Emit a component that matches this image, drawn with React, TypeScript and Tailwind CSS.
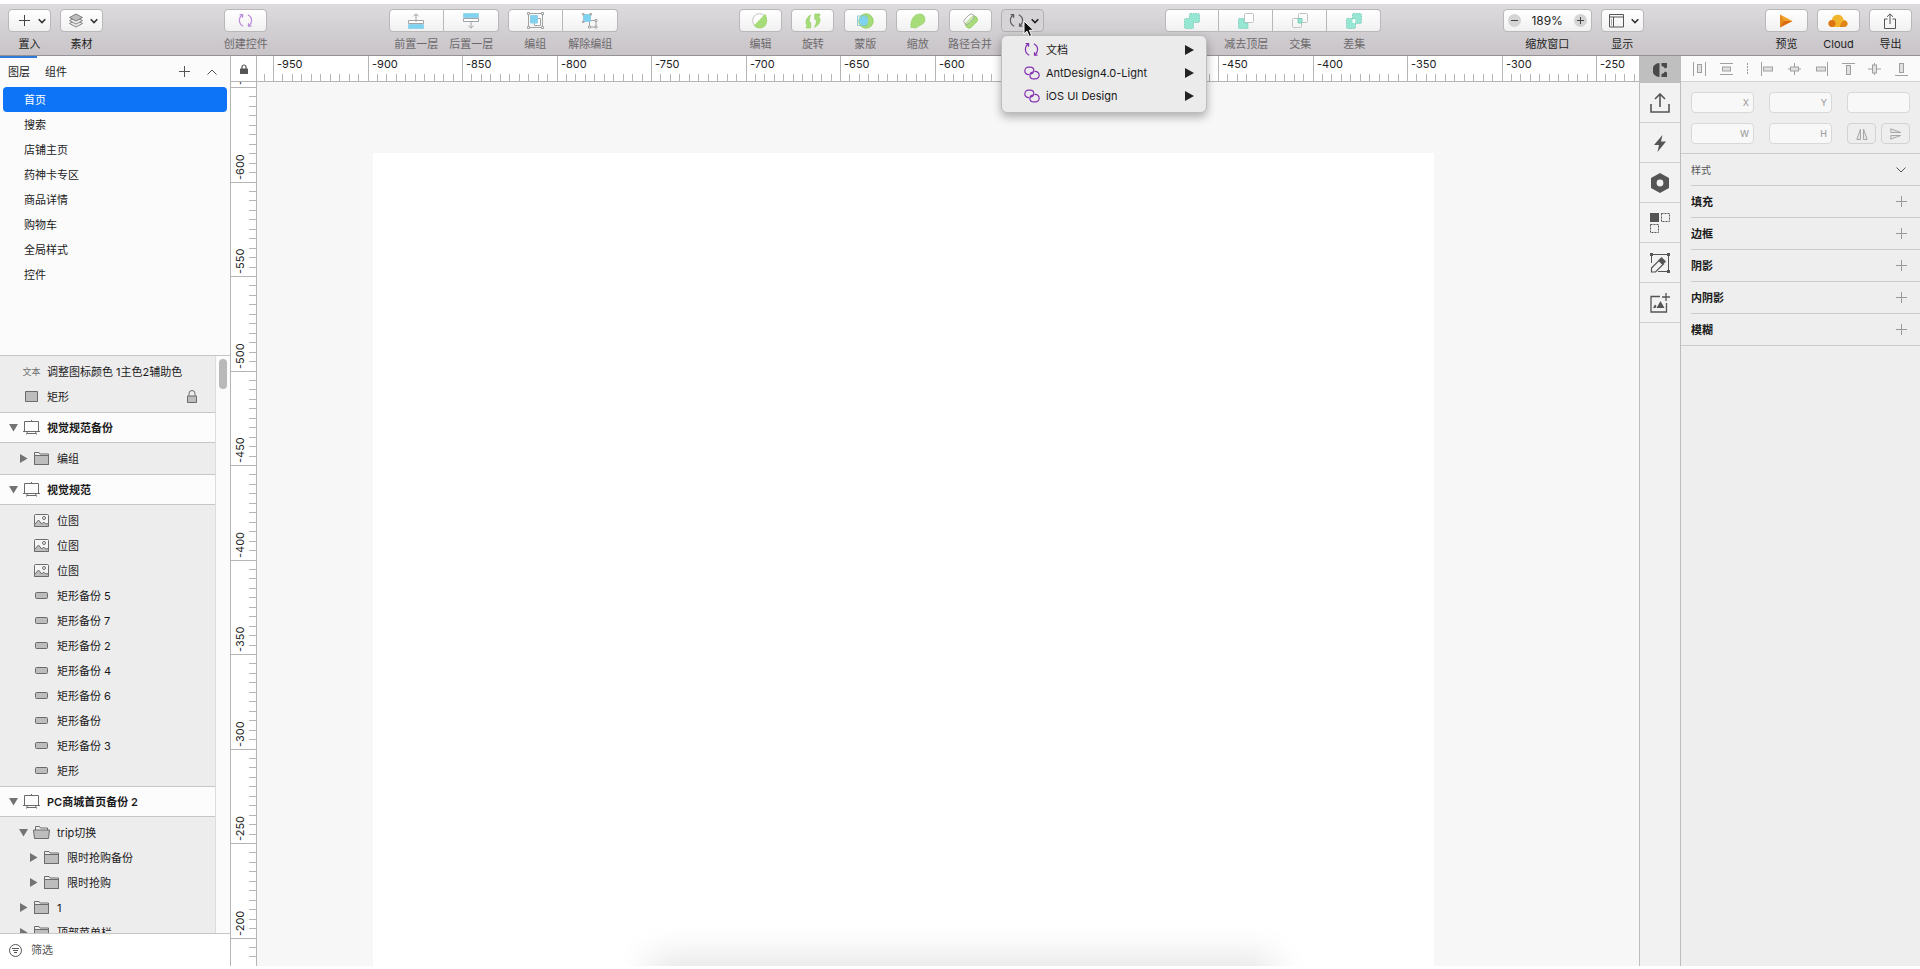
import type { ReactNode } from 'react'

interface Layer {
  name: string
  icon: 'text' | 'rect' | 'bar' | 'image' | 'folder' | 'folderOpen'
  depth: number
  arrow?: 'open' | 'closed'
  locked?: boolean
}

interface Artboard {
  title?: string
  layers: Layer[]
}

const pages = ['首页', '搜索', '店铺主页', '药神卡专区', '商品详情', '购物车', '全局样式', '控件']

const artboards: Artboard[] = [
  {
    layers: [
      { name: '调整图标颜色 1主色2辅助色', icon: 'text', depth: 0 },
      { name: '矩形', icon: 'rect', depth: 0, locked: true },
    ],
  },
  {
    title: '视觉规范备份',
    layers: [{ name: '编组', icon: 'folder', depth: 1, arrow: 'closed' }],
  },
  {
    title: '视觉规范',
    layers: [
      { name: '位图', icon: 'image', depth: 1 },
      { name: '位图', icon: 'image', depth: 1 },
      { name: '位图', icon: 'image', depth: 1 },
      { name: '矩形备份 5', icon: 'bar', depth: 1 },
      { name: '矩形备份 7', icon: 'bar', depth: 1 },
      { name: '矩形备份 2', icon: 'bar', depth: 1 },
      { name: '矩形备份 4', icon: 'bar', depth: 1 },
      { name: '矩形备份 6', icon: 'bar', depth: 1 },
      { name: '矩形备份', icon: 'bar', depth: 1 },
      { name: '矩形备份 3', icon: 'bar', depth: 1 },
      { name: '矩形', icon: 'bar', depth: 1 },
    ],
  },
  {
    title: 'PC商城首页备份 2',
    layers: [
      { name: 'trip切换', icon: 'folderOpen', depth: 1, arrow: 'open' },
      { name: '限时抢购备份', icon: 'folder', depth: 2, arrow: 'closed' },
      { name: '限时抢购', icon: 'folder', depth: 2, arrow: 'closed' },
      { name: '1', icon: 'folder', depth: 1, arrow: 'closed' },
      { name: '顶部菜单栏', icon: 'folder', depth: 1, arrow: 'closed' },
    ],
  },
]

const indents = ['pl-[9px]', 'pl-[19px]', 'pl-[29px]']

const styleSections = ['填充', '边框', '阴影', '内阴影', '模糊']

/* ---------- icons ---------- */

function Chevron({ className = 'text-[#333]' }: { className?: string }) {
  return (
    <svg width="8" height="6" viewBox="0 0 8 6" fill="none" stroke="currentColor" strokeWidth="1.6" className={className}>
      <path d="M0.7 1.2 4 4.6l3.3-3.4" />
    </svg>
  )
}

function Plus({ className = '' }: { className?: string }) {
  return (
    <svg width="11" height="11" viewBox="0 0 11 11" stroke="currentColor" strokeWidth="1" className={className}>
      <path d="M5.5 0v11M0 5.5h11" />
    </svg>
  )
}

function SymbolIcon({ className = '' }: { className?: string }) {
  return (
    <svg width="15" height="15" viewBox="0 0 15 15" fill="none" stroke="currentColor" strokeWidth="1.2" className={className}>
      <path d="M5.2 13.2C2.6 12 1.4 9.6 1.4 7.3c0-2 .9-4 2.8-5.4" />
      <path d="M1.6 1.7h3v3" />
      <path d="M9.8 1.7c2.5 1.2 3.8 3.5 3.8 5.9 0 2-.9 3.9-2.8 5.3" />
      <path d="M13.5 13.2h-3v-3" />
    </svg>
  )
}

function LinkIcon() {
  return (
    <svg width="16" height="14" viewBox="0 0 16 14" fill="none" stroke="currentColor" strokeWidth="1.2" strokeLinecap="round">
      <path d="M4.6 8.6C2.500 8.600.8 7 .8 4.900S2.500 1.200 4.600 1.200h1.600c2 0 3.600 1.500 3.600 3.400 0 1.700-1.200 3-2.800 3.300" />
      <path d="M11.200 5.400c2.200 0 4 1.600 4 3.700s-1.700 3.700-3.800 3.700H9.500c-2 0-3.600-1.500-3.600-3.400 0-1.700 1.200-3.100 2.800-3.400" />
    </svg>
  )
}

function StackIcon() {
  return (
    <svg width="16" height="15" viewBox="0 0 16 15" stroke="#666" strokeWidth="0.8" fill="#ececec">
      <path d="M1.500 10.500 8 7l6.500 3.500L8 14z" />
      <path d="M1.500 7.600 8 4.100l6.500 3.500L8 11.100z" />
      <path d="M1.500 4.500 8 1l6.500 3.500L8 8z" fill="#bdbdbd" />
    </svg>
  )
}

function ForwardIcon() {
  return (
    <svg width="16" height="16" viewBox="0 0 16 16" fill="none" stroke="#a3a3a3">
      <path d="M.5 7.500h15v3H.5z" fill="#fff" />
      <path d="M8 9V1M5.500 3.300 8 .8l2.500 2.500" />
      <path d="M.5 11.500h15v4H.5z" fill="#7fd3f1" stroke="#6ec3e2" strokeDasharray="1 1" />
    </svg>
  )
}

function BackwardIcon() {
  return (
    <svg width="16" height="16" viewBox="0 0 16 16" fill="none" stroke="#a3a3a3">
      <path d="M.5 5.500h15v3H.5z" fill="#fff" />
      <path d="M8 8v7M5.500 12.700 8 15.200l2.500-2.500" />
      <path d="M.5.5h15v4H.5z" fill="#7fd3f1" stroke="#6ec3e2" strokeDasharray="1 1" />
    </svg>
  )
}

function GroupIcon() {
  return (
    <svg width="17" height="17" viewBox="0 0 17 17" fill="none" stroke="#a3a3a3">
      <path d="M1.500 1.500h14v14h-14z" />
      <path d="M7.500 6.500h6v7h-6z" fill="#fff" />
      <path d="M3.500 3.500h7v7.500h-7z" fill="#7fd3f1" stroke="#8ed0e8" />
      <path d="M.5.5h2v2h-2zM14.500.5h2v2h-2zM.5 14.500h2v2h-2zM14.500 14.500h2v2h-2z" fill="#fff" />
    </svg>
  )
}

function UngroupIcon() {
  return (
    <svg width="16" height="16" viewBox="0 0 16 16" fill="none" stroke="#a3a3a3">
      <path d="M7.500 7.500h6.500v6.500H7.500z" />
      <path d="M1.500 1.500h7v7h-7z" fill="#7fd3f1" stroke="#8ed0e8" />
      <path d="M.5.5H2V2H.5zM8 .5h1.500V2H8zM.5 8H2v1.500H.5z" fill="#fff" />
      <path d="M13 6.500h2v2h-2zM6.500 13h2v2h-2zM13 13h2v2h-2z" fill="#fff" />
    </svg>
  )
}

function EditIcon() {
  return (
    <svg width="16" height="16" viewBox="0 0 16 16">
      <circle cx="7.500" cy="7.500" r="6.800" fill="#fff" stroke="#c4c4c4" />
      <path d="M13 1.500 2.200 12.500c1.500 2 4 2.500 6 2.500 3.800 0 6.500-3 6.500-7 0-2.500-.4-5-1.700-6.500z" fill="#a6dd78" stroke="#8cc95b" strokeDasharray="1.500 1" strokeWidth=".8" />
    </svg>
  )
}

function RotateIcon() {
  return (
    <svg width="16" height="16" viewBox="0 0 16 16" fill="#a6dd78" stroke="#8cc95b" strokeWidth=".6">
      <path d="M5.500 2C2.500 4 .8 6.500 1 9.500c0 2 1 3.300 2 4.300H1.200V15h4.500V9.500H4.500c-.6-2 .1-4.500 1-7.500z" />
      <path d="M9.800 1v5.500h1.300c.8 2.500 0 5-1.800 7.800 3.500-1.500 5.800-4 5.700-7.300 0-2-.9-3.500-2-4.500h1.800V1z" />
    </svg>
  )
}

function MaskIcon() {
  return (
    <svg width="18" height="16" viewBox="0 0 18 16">
      <circle cx="10" cy="8" r="7.200" fill="#a6dd78" stroke="#8cc95b" strokeWidth=".8" />
      <path d="M1.500 3h9.500v9.500H1.500z" fill="none" stroke="#75bfdc" strokeWidth=".8" />
      <circle cx="7.500" cy="7.800" r="4.500" fill="#7fd3f1" />
    </svg>
  )
}

function ScaleIcon() {
  return (
    <svg width="16" height="16" viewBox="0 0 16 16">
      <path d="M1 14.500C.3 9 2.500 1.200 9.500 1c3.500 0 5.500 2 5.500 5.500 0 5-5.500 5.500-8.500 8.200C5 15.200 3 14.500 1 14.500z" fill="#a6dd78" stroke="#8cc95b" strokeDasharray="1.500 1" strokeWidth=".8" />
    </svg>
  )
}

function FlattenIcon() {
  return (
    <svg width="17" height="16" viewBox="0 0 17 16">
      <rect x="2.500" y="5.500" width="14" height="7" rx="3.500" transform="rotate(-45 9.500 9)" fill="#a6dd78" stroke="#8cc95b" strokeWidth=".8" />
      <rect x="1" y="3.200" width="12" height="6" rx="3" transform="rotate(-45 7 6.200)" fill="#fff" fillOpacity=".35" stroke="#a3a3a3" strokeWidth=".9" />
    </svg>
  )
}

const mint = '#95e6d2'
const mintEdge = '#6fc5b0'

function UnionIcon() {
  return (
    <svg width="16" height="16" viewBox="0 0 16 16">
      <path d="M6.500.5h8q1 0 1 1v7q0 1-1 1h-5v5q0 1-1 1h-7q-1 0-1-1v-8q0-1 1-1h4v-4q0-1 1-1z" fill={mint} stroke={mintEdge} strokeDasharray="1.500 1" strokeWidth=".8" />
    </svg>
  )
}

function SubtractIcon() {
  return (
    <svg width="16" height="16" viewBox="0 0 16 16">
      <rect x="6.500" y=".5" width="9" height="9" rx="1" fill="#fff" stroke="#c2c2c2" />
      <path d="M1 5.500h5V10h4v5.500H1.500q-1 0-1-1v-8q0-1 .5-1z" fill={mint} stroke={mintEdge} strokeDasharray="1.500 1" strokeWidth=".8" />
    </svg>
  )
}

function IntersectIcon() {
  return (
    <svg width="16" height="16" viewBox="0 0 16 16" fill="none" stroke="#c2c2c2">
      <rect x="6.500" y=".5" width="9" height="9" rx="1" />
      <rect x=".5" y="5.500" width="9" height="9" rx="1" />
      <path d="M6 5.500h4V10H6z" fill={mint} stroke={mintEdge} strokeWidth=".8" />
    </svg>
  )
}

function DifferenceIcon() {
  return (
    <svg width="16" height="16" viewBox="0 0 16 16">
      <g fill={mint} stroke={mintEdge} strokeDasharray="1.500 1" strokeWidth=".8">
        <rect x="6.500" y=".5" width="9" height="10" rx="1" />
        <rect x=".5" y="5.500" width="9" height="10" rx="1" />
      </g>
      <rect x="6.500" y="6" width="3" height="4" rx="1" fill="#fff" />
    </svg>
  )
}

function ViewIcon() {
  return (
    <svg width="15" height="14" viewBox="0 0 15 14" fill="none" stroke="#555">
      <path d="M.5.5h14v12.500H.5zM.5 3h14M4.500 3v10" />
      <path d="M2.500 5v6.500" stroke="#aaa" />
    </svg>
  )
}

function PlayIcon() {
  return (
    <svg width="14" height="14" viewBox="0 0 14 14">
      <path d="M1 .5 13.500 7 1 13.500z" fill="#f0a12c" />
      <path d="M1 .5 5 7l-4 6.500z" fill="#e58a1c" />
      <path d="M5 7h8.500L1 13.500z" fill="#d96a10" />
    </svg>
  )
}

function CloudIcon() {
  return (
    <svg width="20" height="14" viewBox="0 0 20 14">
      <path d="M4.500 13C2 13 .5 11.500.5 9.400c0-2 1.500-3.400 3.500-3.500C4.300 3 6.500.8 9.800.8c3.200 0 5.400 2.200 5.800 5.100 2.400.1 3.900 1.600 3.900 3.600S18 13 15.500 13z" fill="#f2b42c" />
      <path d="M4 5.900c2 0 3.500 1.500 3.500 3.600S6 13 4 13 .5 11.500.5 9.400 2 5.900 4 5.900z" fill="#dc7414" />
      <path d="M12 13c0-3 1.500-5 4-6.500 2.200.3 3.500 1.500 3.500 3.200 0 2-1.500 3.300-4 3.300z" fill="#e08418" />
    </svg>
  )
}

function ExportIcon() {
  return (
    <svg width="12" height="16" viewBox="0 0 12 16" fill="none" stroke="#555">
      <path d="M3.500 6h-3v9.500h11V6h-3M6 11V1M3 3.800 6 .9l3 2.900" />
    </svg>
  )
}

function LayerIcon({ icon }: { icon: Layer['icon'] }) {
  if (icon === 'text') return <span className="text-[9px] leading-4 whitespace-nowrap text-[#6f6f6f]">文本</span>
  if (icon === 'rect') {
    return (
      <svg width="13" height="11" viewBox="0 0 13 11">
        <path d="M.5.5h12v10H.5z" fill="#bdbdbd" stroke="#6b6b6b" />
      </svg>
    )
  }
  if (icon === 'bar') {
    return (
      <svg width="13" height="7" viewBox="0 0 13 7">
        <rect x=".5" y=".5" width="12" height="6" rx="1" fill="#bdbdbd" stroke="#6b6b6b" />
      </svg>
    )
  }
  if (icon === 'image') {
    return (
      <svg width="15" height="13" viewBox="0 0 15 13" stroke="#6b6b6b">
        <rect x=".5" y=".5" width="14" height="12" rx="1" fill="#f5f5f5" />
        <path d="M.5 10.500 4.500 6l3.200 4 2-2 2 2 2.800-.5v3H.5z" fill="#bdbdbd" />
        <circle cx="10" cy="4" r="1.500" fill="none" />
      </svg>
    )
  }
  if (icon === 'folderOpen') {
    return (
      <svg width="17" height="13" viewBox="0 0 17 13" stroke="#6b6b6b">
        <path d="M2.500 4V.5h4l1 1.500h7v2" fill="none" />
        <path d="M.5 4h16l-1 8.500h-14z" fill="#bdbdbd" />
      </svg>
    )
  }
  return (
    <svg width="15" height="13" viewBox="0 0 15 13" stroke="#6b6b6b">
      <path d="M.5 12.500V.5H5l1 1.500h8.500v10.500z" fill="#f0f0f0" />
      <path d="M.5 3.500h14v9H.5z" fill="#bdbdbd" />
    </svg>
  )
}

function Disclosure({ state }: { state?: 'open' | 'closed' }) {
  return (
    <span className="flex w-[9px] shrink-0 justify-center">
      {state && (
        <svg width="9" height="9" viewBox="0 0 9 9" fill="#737373">
          <path d={state === 'open' ? 'M0 1h9L4.500 8.500z' : 'M1 0v9l7.500-4.500z'} />
        </svg>
      )}
    </span>
  )
}

/* ---------- toolbar ---------- */

interface ToolProps {
  label?: string
  name?: string
  dim?: boolean
  menu?: boolean
  children: ReactNode
}

function Tool({ label, dim, menu, children }: ToolProps) {
  return (
    <button className="flex w-[43px] flex-col items-center">
      <span className={`flex h-[23px] w-full items-center rounded border border-[#bab7ba] bg-linear-to-b from-white to-[#f1f1f1] ${menu ? 'justify-between pr-1 pl-[7px]' : 'justify-center'}`}>
        {menu ? (
          <>
            <span className="flex w-4 justify-center">{children}</span>
            <Chevron />
          </>
        ) : (
          children
        )}
      </span>
      <span className={`mt-1 leading-4 whitespace-nowrap ${dim ? 'text-[#6c696c]' : 'text-[#1e1e1e]'}`}>{label}</span>
    </button>
  )
}

function Segment({ label, name, children }: ToolProps) {
  return (
    <button aria-label={label ?? name} className="group flex flex-1 flex-col items-center">
      <span className="flex h-[23px] w-full items-center justify-center border-y border-r border-[#bab7ba] bg-linear-to-b from-white to-[#f1f1f1] group-first:rounded-l group-first:border-l group-last:rounded-r">
        {children}
      </span>
      <span className="mt-1 leading-4 whitespace-nowrap text-[#6c696c]">{label}</span>
    </button>
  )
}

function SymbolMenu() {
  const items = [
    { name: '文档', icon: <SymbolIcon /> },
    { name: 'AntDesign4.0-Light', icon: <LinkIcon /> },
    { name: 'iOS UI Design', icon: <LinkIcon /> },
  ]
  return (
    <div className="absolute top-[26px] left-0 z-20 w-[206px] rounded-md border border-[#bdbdbd] bg-[#ebebeb] pt-0.5 pb-[5px] shadow-[0_4px_10px_rgba(0,0,0,0.3)]">
      {items.map((item) => (
        <button key={item.name} className="flex h-[23px] w-full items-center pr-3 pl-[22px] text-[#1a1a1a]">
          <span className="flex w-4 justify-center text-[#8430b0]">{item.icon}</span>
          <span className="ml-[6px] whitespace-nowrap">{item.name}</span>
          <svg width="9" height="10" viewBox="0 0 9 10" fill="#222" className="ml-auto">
            <path d="M0 0v10l9-5z" />
          </svg>
        </button>
      ))}
    </div>
  )
}

function Toolbar() {
  return (
    <header className="flex h-[52px] shrink-0 justify-between border-b border-[#959295] bg-linear-to-b from-[#dddbdd] to-[#c8c4c8] px-2 pt-[5px]">
      <div className="flex gap-[9px]">
        <Tool label="置入" menu><Plus className="text-[#444]" /></Tool>
        <Tool label="素材" menu><StackIcon /></Tool>
      </div>
      <Tool label="创建控件" dim>
        <SymbolIcon className="text-[#b98bdd]" />
      </Tool>
      <div className="flex gap-[9px]">
        <div className="flex w-[110px]">
          <Segment label="前置一层"><ForwardIcon /></Segment>
          <Segment label="后置一层"><BackwardIcon /></Segment>
        </div>
        <div className="flex w-[110px]">
          <Segment label="编组"><GroupIcon /></Segment>
          <Segment label="解除编组"><UngroupIcon /></Segment>
        </div>
      </div>
      <div className="flex w-[305px] justify-between">
        <Tool label="编辑" dim><EditIcon /></Tool>
        <Tool label="旋转" dim><RotateIcon /></Tool>
        <Tool label="蒙版" dim><MaskIcon /></Tool>
        <Tool label="缩放" dim><ScaleIcon /></Tool>
        <Tool label="路径合并" dim><FlattenIcon /></Tool>
        <div className="relative w-[43px]">
          <button aria-label="控件" className="flex h-[23px] w-full items-center justify-between rounded border border-[#b3b0b3] bg-[#d6d4d6] pr-1 pl-[7px]">
            <SymbolIcon className="text-[#5b5b5b]" />
            <Chevron className="text-[#222]" />
          </button>
          <SymbolMenu />
          <svg width="12" height="18" viewBox="0 0 12 18" className="absolute top-[11px] left-[22px] z-30">
            <path d="M1 1v13l3-2.800 2.200 5.300 2.400-1L6.400 10.300h4.300z" fill="#111" stroke="#fff" strokeWidth="1" />
          </svg>
        </div>
      </div>
      <div className="flex w-[216px]">
        <Segment name="联集"><UnionIcon /></Segment>
        <Segment label="减去顶层"><SubtractIcon /></Segment>
        <Segment label="交集"><IntersectIcon /></Segment>
        <Segment label="差集"><DifferenceIcon /></Segment>
      </div>
      <div className="flex gap-[9px]">
        <div className="flex w-[89px] flex-col items-center text-[#1e1e1e]">
          <div className="flex h-[23px] w-full items-center justify-between rounded border border-[#bab7ba] bg-linear-to-b from-white to-[#f1f1f1] px-1">
            <button aria-label="缩小" className="flex size-[13px] items-center justify-center rounded-full bg-[#d4d4d4]">
              <svg width="7" height="7" viewBox="0 0 7 7" stroke="#444"><path d="M0 3.500h7" /></svg>
            </button>
            <span className="text-xs">189%</span>
            <button aria-label="放大" className="flex size-[13px] items-center justify-center rounded-full bg-[#d4d4d4]">
              <svg width="7" height="7" viewBox="0 0 7 7" stroke="#444"><path d="M0 3.500h7M3.500 0v7" /></svg>
            </button>
          </div>
          <span className="mt-1 leading-4">缩放窗口</span>
        </div>
        <Tool label="显示" menu><ViewIcon /></Tool>
      </div>
      <div className="flex gap-[9px]">
        <Tool label="预览"><PlayIcon /></Tool>
        <Tool label="Cloud"><CloudIcon /></Tool>
        <Tool label="导出"><ExportIcon /></Tool>
      </div>
    </header>
  )
}

/* ---------- left sidebar ---------- */

function LayerRow({ layer }: { layer: Layer }) {
  return (
    <li className={`flex h-[25px] items-center ${indents[layer.depth]}`}>
      <Disclosure state={layer.arrow} />
      <span className="ml-[5px] flex w-[17px] shrink-0 justify-center">
        <LayerIcon icon={layer.icon} />
      </span>
      <span className="ml-[7px] whitespace-nowrap">{layer.name}</span>
      {layer.locked && (
        <svg width="10" height="13" viewBox="0 0 10 13" stroke="#6b6b6b" className="mr-[18px] ml-auto">
          <path d="M2 6V3.500a3 3 0 0 1 6 0V6" fill="none" />
          <path d="M.5 6h9v6.500h-9z" fill="#bdbdbd" />
        </svg>
      )}
    </li>
  )
}

function Sidebar() {
  return (
    <aside className="flex w-[231px] shrink-0 flex-col border-r border-[#b5b5b5] bg-[#fbfbfb]">
      <div className="flex h-[31px] shrink-0 items-start">
        <button className="h-[30px] w-[37px] border-t-2 border-[#2f7ad6] pl-2 text-left whitespace-nowrap">图层</button>
        <button className="h-[30px] border-t-2 border-transparent pl-2">组件</button>
        <div className="ml-auto flex h-full items-center gap-[17px] pr-[13px] text-[#555]">
          <button aria-label="添加页面"><Plus /></button>
          <button aria-label="收起">
            <svg width="10" height="6" viewBox="0 0 10 6" fill="none" stroke="currentColor"><path d="M.5 5.500 5 1l4.500 4.500" /></svg>
          </button>
        </div>
      </div>
      <ul className="h-[268px] shrink-0 px-[3px]">
        {pages.map((page, i) => (
          <li key={page} className={`flex h-[25px] items-center rounded pl-[21px] ${i === 0 ? 'bg-[#0d74f7] text-white' : ''}`}>
            {page}
          </li>
        ))}
      </ul>
      <div className="flex min-h-0 flex-1 border-t border-[#c6c6c6]">
        <div className="min-w-0 flex-1 overflow-hidden border-r border-[#dcdcdc] bg-[#ededed]">
          {artboards.map((artboard, i) => (
            <section key={i}>
              {artboard.title && (
                <h3 className="flex h-[31px] items-center border-y border-[#c6c6c6] bg-[#fcfcfc] pl-[9px] font-semibold">
                  <Disclosure state="open" />
                  <svg width="17" height="15" viewBox="0 0 17 15" fill="none" stroke="#6b6b6b" className="ml-[5px] shrink-0">
                    <path d="M1.500 1.500h14v10h-14zM8.500 0v1.500M0 11.500h17M4.500 11.500l-1 3M12.500 11.500l1 3M4 13.500h9" />
                  </svg>
                  <span className="ml-[7px] whitespace-nowrap">{artboard.title}</span>
                </h3>
              )}
              <ul className="py-[3px]">
                {artboard.layers.map((layer, j) => (
                  <LayerRow key={j} layer={layer} />
                ))}
              </ul>
            </section>
          ))}
        </div>
        <div className="flex w-[14px] justify-center pt-[3px]">
          <div className="h-[30px] w-2 rounded-full bg-[#b9b9b9]" />
        </div>
      </div>
      <div className="flex h-[33px] shrink-0 items-center gap-[9px] border-t border-[#c6c6c6] bg-white pl-[9px] text-[#555]">
        <svg width="13" height="13" viewBox="0 0 13 13" fill="none" stroke="currentColor">
          <circle cx="6.500" cy="6.500" r="6" />
          <path d="M3 4.500h7M4 6.500h5M5 8.500h3" />
        </svg>
        <span>筛选</span>
      </div>
    </aside>
  )
}

/* ---------- canvas ---------- */

const STEP = 94.5

interface RulerProps {
  vertical?: boolean
  origin: number
  first: number
  count: number
}

// fifty units take one step, with ten minor ticks in it
function Ruler({ vertical = false, origin, first, count }: RulerProps) {
  const majors = Array.from({ length: count }, (_, i) => i)
  const minors = Array.from({ length: count * 10 + 10 }, (_, i) => i - 10)
  return (
    <svg className={vertical ? 'min-h-0 w-[25px] flex-1' : 'h-[25px] w-full'} fill="#222" stroke="none" fontSize="11">
      {minors.map((n) => {
        const p = Math.round(origin + (n * STEP) / 10)
        return vertical ? (
          <rect key={n} x="18" y={p} width="7" height="1" fill="#b5b5b5" />
        ) : (
          <rect key={n} x={p} y="18" width="1" height="7" fill="#b5b5b5" />
        )
      })}
      {majors.map((n) => {
        const p = Math.round(origin + n * STEP)
        const label = first + n * 50
        return vertical ? (
          <g key={n}>
            <rect x="0" y={p} width="25" height="1" fill="#b5b5b5" />
            <text transform={`translate(13 ${p - 2}) rotate(-90)`}>{label}</text>
          </g>
        ) : (
          <g key={n}>
            <rect x={p} y="0" width="1" height="25" fill="#b5b5b5" />
            <text x={p + 4} y="12">{label}</text>
          </g>
        )
      })}
    </svg>
  )
}

function Canvas() {
  return (
    <main className="flex min-w-0 flex-1 bg-white">
      <div className="flex w-[26px] shrink-0 flex-col border-r border-[#b5b5b5]">
        <div className="flex h-[26px] shrink-0 items-center justify-center border-b border-[#b5b5b5]">
          <svg width="8" height="10" viewBox="0 0 8 10" fill="#555">
            <path d="M2 5V3a2 2 0 0 1 4 0v2" fill="none" stroke="#555" strokeWidth="1.2" />
            <rect y="4.500" width="8" height="5.500" rx=".5" />
          </svg>
        </div>
        <Ruler vertical origin={5} first={-650} count={10} />
      </div>
      <div className="flex min-w-0 flex-1 flex-col">
        <div className="h-[26px] shrink-0 border-b border-[#b5b5b5]">
          <Ruler origin={16} first={-950} count={15} />
        </div>
        <div className="relative flex min-h-0 flex-1 overflow-hidden bg-[#f7f7f7] pt-[71px] pr-[205px] pl-[116px]">
          <div className="flex-1 bg-white" />
          <div className="absolute -bottom-5 left-[29%] h-5 w-[44%] shadow-[0_0_36px_8px_rgba(0,0,0,0.12)]" />
        </div>
      </div>
    </main>
  )
}

/* ---------- right side ---------- */

function Rail() {
  const tools = [
    {
      name: '上传',
      icon: <path d="M1 11v8h18v-8M10 14V1.500M5 6l5-5 5 5" fill="none" stroke="#555" strokeWidth="1.6" />,
    },
    { name: '快捷', icon: <path d="M12.500 2 4 12h5l-1.500 7L16 8.500h-5z" fill="#555" /> },
    {
      name: '组件库',
      icon: <path fillRule="evenodd" d="m10 0 9 5v10l-9 5-9-5V5zm0 6.600a3.400 3.400 0 1 0 0 6.800 3.400 3.400 0 0 0 0-6.800z" fill="#555" />,
    },
    {
      name: '填充数据',
      icon: (
        <>
          <path d="M0 0h9v9H0z" fill="#555" />
          <path d="M11.500.5h8v8h-8zM.5 11.500h8v8h-8z" fill="none" stroke="#555" strokeDasharray="2 1" />
        </>
      ),
    },
    {
      name: '切图',
      icon: (
        <>
          <path d="M3 1.500h14M18.500 3v14M17 18.500H8M1.500 3v7" fill="none" stroke="#555" />
          <path d="M0 0h3v3H0zM17 0h3v3h-3zM17 17h3v3h-3z" fill="#555" />
          <path d="m1.500 15 8-8 4 4-8 8h-4z" fill="none" stroke="#555" strokeWidth="1.2" />
          <path d="m8 7.500 3.500-3.500 4.500 4.500-3.500 3.500z" fill="#555" />
        </>
      ),
    },
    {
      name: '图片',
      icon: (
        <>
          <path d="M10 3.500H1v15.500h15.500v-9M16 0v8M12 4h8" fill="none" stroke="#555" strokeWidth="1.3" />
          <path d="m6.500 15 4-7 4 7zM3 15l2-3.500L6.500 13 5.500 15z" fill="#555" />
        </>
      ),
    },
  ]
  return (
    <nav className="flex w-[42px] shrink-0 flex-col border-x border-[#bdbdbd] bg-[#f2f2f2]">
      <button aria-label="插件" className="flex h-[27px] items-center justify-center bg-[#bfbfbf]">
        <svg width="14" height="14" viewBox="0 0 14 14" fill="#4a4a4a">
          <path d="M6.500 0v14a7 7 0 0 1 0-14zM8.500 0H14v4.500l-2 1A5 5 0 0 0 8.500 3zM8.500 14H14V9.500l-2-1A5 5 0 0 1 8.500 11z" />
        </svg>
      </button>
      {tools.map((tool) => (
        <button key={tool.name} aria-label={tool.name} className="flex h-10 items-center justify-center border-b border-[#d0d0d0]">
          <svg width="20" height="20" viewBox="0 0 20 20">{tool.icon}</svg>
        </button>
      ))}
    </nav>
  )
}

// line paths and the bar of each align button
const alignIcons = [
  { name: '水平分布', lines: 'M.5 0v14M12.500 0v14', x: 4.5, y: 2.5, w: 4, h: 8 },
  { name: '垂直分布', lines: 'M0 1.500h13M0 12.500h13', x: 2.5, y: 5, w: 8, h: 4 },
  { name: '左对齐', lines: 'M.5 0v14', x: 2.5, y: 5, w: 9, h: 4 },
  { name: '水平居中', lines: 'M6.500 1v12M0 7h13', x: 2.5, y: 5, w: 8, h: 4 },
  { name: '右对齐', lines: 'M12.500 0v14', x: 1.5, y: 5, w: 9, h: 4 },
  { name: '顶对齐', lines: 'M0 1.500h13', x: 4.5, y: 3.5, w: 4, h: 9 },
  { name: '垂直居中', lines: 'M0 7h13M6.500 1v12', x: 4.5, y: 3, w: 4, h: 8 },
  { name: '底对齐', lines: 'M0 13.500h13', x: 4.5, y: 1.5, w: 4, h: 9 },
]

function AlignButton({ name, lines, x, y, w, h }: (typeof alignIcons)[number]) {
  return (
    <button aria-label={name}>
      <svg width="13" height="14" viewBox="0 0 13 14" fill="#e0e0e0" stroke="#a0a0a0">
        <path d={lines} />
        <rect x={x} y={y} width={w} height={h} />
      </svg>
    </button>
  )
}

function Field({ label }: { label: string }) {
  return (
    <label className="flex h-[21px] w-[63px] items-center rounded border border-[#d8d8d8] bg-[#f8f8f8] pr-1 text-[9px] font-medium text-[#a3a3a3]">
      <input type="text" className="w-0 min-w-0 flex-1 bg-transparent pl-1 outline-none" />
      {label}
    </label>
  )
}

function Inspector() {
  return (
    <aside className="flex w-[239px] shrink-0 flex-col bg-[#eeeeee]">
      <div className="flex h-[26px] shrink-0 items-center justify-between border-b border-[#d2d2d2] bg-[#fafafa] px-3">
        {alignIcons.slice(0, 2).map((a) => (
          <AlignButton key={a.name} {...a} />
        ))}
        <svg width="1" height="13" viewBox="0 0 1 13" fill="#999">
          <path d="M0 1h1v2H0zM0 4h1v2H0zM0 7h1v2H0zM0 10h1v2H0z" />
        </svg>
        {alignIcons.slice(2).map((a) => (
          <AlignButton key={a.name} {...a} />
        ))}
      </div>
      <div className="flex flex-col gap-[10px] border-b border-[#cbcbcb] px-[10px] pt-[10px] pb-[9px]">
        <div className="flex justify-between">
          <Field label="X" />
          <Field label="Y" />
          <input type="text" aria-label="旋转" className="h-[21px] w-[63px] rounded border border-[#d8d8d8] bg-[#f8f8f8]" />
        </div>
        <div className="flex justify-between">
          <Field label="W" />
          <Field label="H" />
          <div className="flex w-[63px] justify-between">
            <button aria-label="水平翻转" className="flex h-[21px] w-[29px] items-center justify-center rounded border border-[#d2d2d2]">
              <svg width="12" height="12" viewBox="0 0 12 12" fill="#e4e4e4" stroke="#a8a8a8">
                <path d="M4.500 1v10.500H.8zM7.500 1v10.500h3.700z" />
              </svg>
            </button>
            <button aria-label="垂直翻转" className="flex h-[21px] w-[29px] items-center justify-center rounded border border-[#d2d2d2]">
              <svg width="12" height="12" viewBox="0 0 12 12" fill="#e4e4e4" stroke="#a8a8a8">
                <path d="M.8.8v3.700h10zM.8 11.200V7.500h10z" />
              </svg>
            </button>
          </div>
        </div>
      </div>
      <div className="border-b border-[#cbcbcb] pl-[10px]">
        <button className="flex h-[31px] w-full items-center justify-between pr-[14px] text-[10px] text-[#555]">
          样式
          <svg width="10" height="6" viewBox="0 0 10 6" fill="none" stroke="currentColor"><path d="M.5.5 5 5 9.500.5" /></svg>
        </button>
        {styleSections.map((name) => (
          <div key={name} className="flex h-8 items-center justify-between border-t border-[#cbcbcb] pr-[13px]">
            <h3 className="font-bold">{name}</h3>
            <button aria-label={`添加${name}`} className="text-[#999]"><Plus /></button>
          </div>
        ))}
      </div>
    </aside>
  )
}

export default function App() {
  return (
    <div className="flex h-screen flex-col overflow-hidden bg-white pt-1 pb-[3px] font-['Inter','Noto_Sans_CJK_SC',sans-serif] text-[11px] leading-4 text-[#1a1a1a]">
      <Toolbar />
      <div className="flex min-h-0 flex-1">
        <Sidebar />
        <Canvas />
        <Rail />
        <Inspector />
      </div>
    </div>
  )
}
